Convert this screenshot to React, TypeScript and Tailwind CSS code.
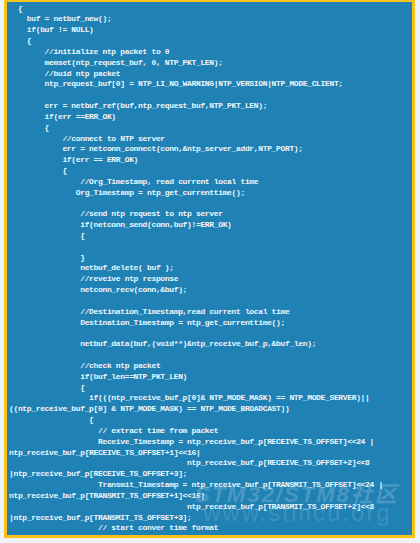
import React from "react";

// Source lines, indentation kept as spaces (one space = one monospace cell).
const CODE_LINES: string[] = [
  "  {",
  "    buf = netbuf_new();",
  "    if(buf != NULL)",
  "    {",
  "        //initialize ntp packet to 0",
  "        memset(ntp_request_buf, 0, NTP_PKT_LEN);",
  "        //buid ntp packet",
  "        ntp_request_buf[0] = NTP_LI_NO_WARNING|NTP_VERSION|NTP_MODE_CLIENT;",
  "",
  "        err = netbuf_ref(buf,ntp_request_buf,NTP_PKT_LEN);",
  "        if(err ==ERR_OK)",
  "        {",
  "            //connect to NTP server",
  "            err = netconn_connect(conn,&ntp_server_addr,NTP_PORT);",
  "            if(err == ERR_OK)",
  "            {",
  "                //Org_Timestamp, read current local time",
  "               Org_Timestamp = ntp_get_currenttime();",
  "",
  "                //send ntp request to ntp server",
  "                if(netconn_send(conn,buf)!=ERR_OK)",
  "                {",
  "",
  "                }",
  "                netbuf_delete( buf );",
  "                //reveive ntp response",
  "                netconn_recv(conn,&buf);",
  "",
  "                //Destination_Timestamp,read current local time",
  "                Destination_Timestamp = ntp_get_currenttime();",
  "",
  "                netbuf_data(buf,(void**)&ntp_receive_buf_p,&buf_len);",
  "",
  "                //check ntp packet",
  "                if(buf_len==NTP_PKT_LEN)",
  "                {",
  "                  if(((ntp_receive_buf_p[0]& NTP_MODE_MASK) == NTP_MODE_SERVER)||",
  "((ntp_receive_buf_p[0] & NTP_MODE_MASK) == NTP_MODE_BROADCAST))",
  "                  {",
  "                    // extract time from packet",
  "                    Receive_Timestamp = ntp_receive_buf_p[RECEIVE_TS_OFFSET]<<24 |",
  "ntp_receive_buf_p[RECEIVE_TS_OFFSET+1]<<16|",
  "                                        ntp_receive_buf_p[RECEIVE_TS_OFFSET+2]<<8",
  "|ntp_receive_buf_p[RECEIVE_TS_OFFSET+3];",
  "                    Transmit_Timestamp = ntp_receive_buf_p[TRANSMIT_TS_OFFSET]<<24 |",
  "ntp_receive_buf_p[TRANSMIT_TS_OFFSET+1]<<16|",
  "                                        ntp_receive_buf_p[TRANSMIT_TS_OFFSET+2]<<8",
  "|ntp_receive_buf_p[TRANSMIT_TS_OFFSET+3];",
  "                    // start conver time format",
];

export default function App() {
  return (
    <div className="w-[420px] h-[543px] bg-[#eef3f9] overflow-hidden">
      <div className="ml-[4px] w-[411px] h-[538px] border-[3px] border-t-2 border-[#f8c21c] bg-[#1f81b4] relative overflow-hidden">
        {/* ── Code block ─────────────────────────────────────────── */}
        <div className="pl-[2px] pt-[1.6px] font-['Liberation_Mono','DejaVu_Sans_Mono',monospace] text-[8px] leading-[10.83px] tracking-[-0.35px] font-bold text-[#eef6fb]">
          {CODE_LINES.map((line, idx) => (
            <div key={idx} className="whitespace-pre h-[10.83px]">
              {line}
            </div>
          ))}
        </div>

        {/* ── Watermark ──────────────────────────────────────────── */}
        <div className="absolute left-[188px] top-[482px] whitespace-nowrap font-['Liberation_Sans','Noto_Sans_CJK_SC',sans-serif] text-[22px] leading-[22px] font-bold italic tracking-[2px] text-white/20 pointer-events-none">
          STM32/STM8社区
        </div>
        <div className="absolute left-[196px] top-[499px] whitespace-nowrap font-['Liberation_Sans',sans-serif] text-[24px] leading-[24px] tracking-[2px] text-white/15 pointer-events-none">
          www.stmcu.org
        </div>
      </div>
    </div>
  );
}
